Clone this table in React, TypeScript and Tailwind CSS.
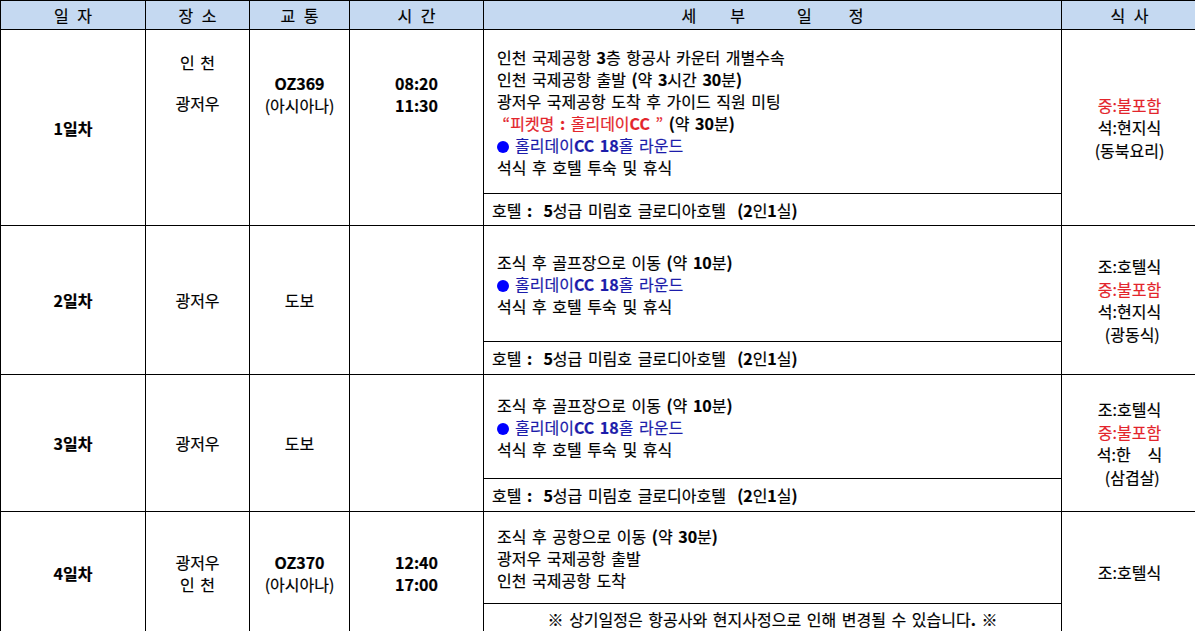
import type { ReactNode } from "react";

const font = { fontFamily: '"Noto Sans CJK KR", "Noto Sans", sans-serif' };

// ASCII runs (digits, latin, brackets) show up heavier than the hangul in the sheet
function Mix({ s }: { s: string }) {
  return (
    <span className="whitespace-pre">
      {s.split(/([!-~]+)/).map((p, i) =>
        /^[!-~]+$/.test(p) ? (
          <b key={i} className="font-bold">
            {p}
          </b>
        ) : (
          p
        )
      )}
    </span>
  );
}

const cell = "border-r border-b border-black bg-white";
const head =
  "flex items-center justify-center whitespace-pre border-r border-b border-black bg-[#c5d9f1] [word-spacing:5px]";

function Bullet() {
  return (
    <>
      <span className="mr-[6px] inline-block h-[12px] w-[12px] translate-y-[1px] rounded-full bg-[#0000ff]" />
      <span className="text-[#1c1caa]">
        <Mix s="홀리데이CC 18홀 라운드" />
      </span>
    </>
  );
}

function Plan({ lines }: { lines: ReactNode[] }) {
  return (
    <div className={`${cell} flex flex-col justify-center pl-[13px] leading-[22px]`}>
      {lines.map((l, i) => (
        <div key={i} className="whitespace-pre">
          {l}
        </div>
      ))}
    </div>
  );
}

function Hotel() {
  return (
    <div className={`${cell} flex items-center pl-[8px]`}>
      <Mix s="호텔 :  5성급 미림호 글로디아호텔  (2인1실)" />
    </div>
  );
}

function Meals({ lines }: { lines: { t: string; red?: boolean }[] }) {
  return (
    <div className={`${cell} row-span-2 flex flex-col items-center justify-center leading-[22.5px]`}>
      {lines.map((l, i) => (
        <div key={i} className={`whitespace-pre ${l.red ? "text-[#e3242b]" : ""}`}>
          {l.t}
        </div>
      ))}
    </div>
  );
}

function Center({ children, bold }: { children: ReactNode; bold?: boolean }) {
  return (
    <div
      className={`${cell} row-span-2 flex flex-col items-center justify-center leading-[22px] ${bold ? "font-bold" : ""}`}
    >
      {children}
    </div>
  );
}

export default function App() {
  return (
    <div
      className="h-[631px] w-[1195px] overflow-hidden bg-white text-[16px] text-black [word-spacing:2px] [-webkit-text-stroke:0.2px_currentColor]"
      style={font}
    >
      <div className="grid w-[1197px] grid-cols-[145px_104px_100px_134px_578px_136px] grid-rows-[29px_164px_32px_116px_33px_104px_33px_92px_30px] border-l border-t border-black">
        {/* header */}
        {["일 자", "장 소", "교 통", "시 간"].map((h) => (
          <div key={h} className={head}>
            {h}
          </div>
        ))}
        <div className={head}>
          <span>세</span>
          <span className="ml-[34px]">부</span>
          <span className="ml-[52px]">일</span>
          <span className="ml-[37px]">정</span>
        </div>
        <div className={head}>식 사</div>

        {/* day 1 */}
        <Center bold>1일차</Center>
        <div className={`${cell} row-span-2 flex flex-col items-center pt-[21px] leading-[22px]`}>
          <div className="whitespace-pre">인 천</div>
          <div className="mt-[19px]">광저우</div>
        </div>
        <div className={`${cell} row-span-2 flex flex-col items-center pt-[42px] leading-[22px]`}>
          <div className="font-bold">OZ369</div>
          <div>(아시아나)</div>
        </div>
        <div className={`${cell} row-span-2 flex flex-col items-center pt-[42px] font-bold leading-[22px]`}>
          <div>08:20</div>
          <div>11:30</div>
        </div>
        <Plan
          lines={[
            <Mix s="인천 국제공항 3층 항공사 카운터 개별수속" />,
            <Mix s="인천 국제공항 출발 (약 3시간 30분)" />,
            <Mix s="광저우 국제공항 도착 후 가이드 직원 미팅" />,
            <>
              <span className="text-[#e3242b]">
                <Mix s=" “피켓명 : 홀리데이CC ”" />
              </span>{" "}
              <Mix s="(약 30분)" />
            </>,
            <Bullet />,
            "석식 후 호텔 투숙 및 휴식",
          ]}
        />
        <Meals
          lines={[{ t: "중:불포함", red: true }, { t: "석:현지식" }, { t: "(동북요리)" }]}
        />
        <Hotel />

        {/* day 2 */}
        <Center bold>2일차</Center>
        <Center>광저우</Center>
        <Center>도보</Center>
        <Center>{""}</Center>
        <Plan
          lines={[<Mix s="조식 후 골프장으로 이동 (약 10분)" />, <Bullet />, "석식 후 호텔 투숙 및 휴식"]}
        />
        <Meals
          lines={[
            { t: "조:호텔식" },
            { t: "중:불포함", red: true },
            { t: "석:현지식" },
            { t: " (광동식)" },
          ]}
        />
        <Hotel />

        {/* day 3 */}
        <Center bold>3일차</Center>
        <Center>광저우</Center>
        <Center>도보</Center>
        <Center>{""}</Center>
        <Plan
          lines={[<Mix s="조식 후 골프장으로 이동 (약 10분)" />, <Bullet />, "석식 후 호텔 투숙 및 휴식"]}
        />
        <Meals
          lines={[
            { t: "조:호텔식" },
            { t: "중:불포함", red: true },
            { t: "석:한   식" },
            { t: " (삼겹살)" },
          ]}
        />
        <Hotel />

        {/* day 4 */}
        <Center bold>4일차</Center>
        <Center>
          <div>광저우</div>
          <div className="whitespace-pre">인 천</div>
        </Center>
        <Center>
          <div className="font-bold">OZ370</div>
          <div>(아시아나)</div>
        </Center>
        <Center bold>
          <div>12:40</div>
          <div>17:00</div>
        </Center>
        <Plan
          lines={[<Mix s="조식 후 공항으로 이동 (약 30분)" />, "광저우 국제공항 출발", "인천 국제공항 도착"]}
        />
        <Meals lines={[{ t: "조:호텔식" }]} />
        <div className={`${cell} flex items-center justify-center`}>
          <Mix s="※ 상기일정은 항공사와 현지사정으로 인해 변경될 수 있습니다. ※" />
        </div>
      </div>
    </div>
  );
}
